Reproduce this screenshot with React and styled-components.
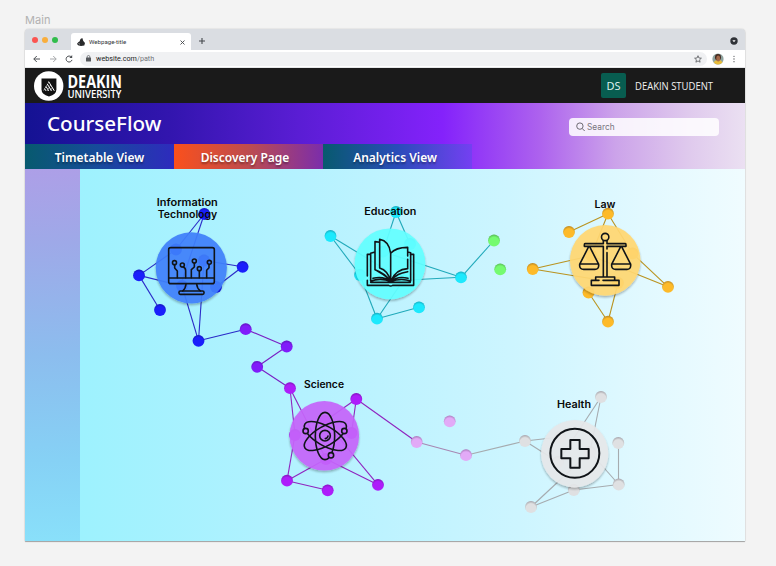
import React from "react";
import styled, { createGlobalStyle } from "styled-components";

const GlobalStyle = createGlobalStyle`
  * { box-sizing: border-box; }
  body { margin: 0; background: #f3f3f3; overflow: hidden; font-family: "Noto Sans", sans-serif; }
`;

const Page = styled.div`
  width: 776px;
  height: 566px;
  padding: 12px 31px 0 25px;
`;
const FrameName = styled.div`
  height: 17px;
  font: 400 11px/16px Inter, sans-serif;
  letter-spacing: 0.1px;
  color: #b1b1b1;
`;
const Browser = styled.main`
  width: 720px;
  height: 512px;
  border-radius: 4px 4px 0 0;
  overflow: hidden;
  display: flex;
  flex-direction: column;
`;
const Shadow = styled.div`
  width: 720px;
  height: 512px;
  border-radius: 4px 4px 0 0;
  box-shadow: 0 1px 1px rgba(0, 0, 0, 0.3), 0 0 1.5px rgba(0, 0, 0, 0.25);
`;
const TabStrip = styled.div`
  height: 21px;
  flex: none;
  background: #dadde2;
  display: flex;
  align-items: flex-end;
  padding: 0 7px 0 7px;
`;
const Lights = styled.div`
  display: flex;
  gap: 4px;
  height: 21px;
  align-items: center;
  width: 39px;
`;
const Light = styled.i`
  width: 6px;
  height: 6px;
  border-radius: 50%;
  background: ${(p) => p.$color};
`;
const BrowserTab = styled.div`
  width: 120px;
  height: 17px;
  border-radius: 3px 3px 0 0;
  background: #fff;
  display: flex;
  align-items: center;
  padding: 1px 6px 0 6px;
  font: 400 6.1px/10px Roboto, sans-serif;
  color: #33363a;
  gap: 4px;
`;
const Grow = styled.span`
  flex: 1;
`;
const StripIcon = styled.svg`
  display: block;
  flex: none;
  margin: ${(p) => p.$margin || "0"};
`;
const AddressBar = styled.div`
  height: 18px;
  flex: none;
  background: #fff;
  border-bottom: 1px solid #e6e7e9;
  display: flex;
  align-items: center;
  padding: 0 7px 0 8px;
`;
const UrlField = styled.div`
  width: 627px;
  height: 14px;
  margin-left: 5px;
  border-radius: 7px;
  background: #f0f1f3;
  display: flex;
  align-items: center;
  padding: 0 5px 0 6px;
  font: 400 7.2px/12px Roboto, sans-serif;
  color: #202124;
`;
const Path = styled.span`
  color: #70757a;
`;
const BrandBar = styled.header`
  height: 35px;
  flex: none;
  background: #1a1a1a;
  display: flex;
  align-items: center;
  padding: 0 0 0 9px;
`;
const Profile = styled.div`
  margin-left: auto;
  display: flex;
  align-items: center;
  gap: 9px;
  color: #f2f2f2;
`;
const Initials = styled.div`
  width: 25px;
  height: 25px;
  border-radius: 2px;
  background: #085d50;
  font-size: 11px;
  line-height: 26px;
  text-align: center;
  color: #dcefec;
`;
const UserName = styled.svg`
  display: block;
  overflow: visible;
  margin-right: 31px;
`;
const Banner = styled.section`
  height: 66px;
  flex: none;
  display: flex;
  flex-direction: column;
  background: linear-gradient(90deg, #141293 0%, #3215ae 20%, #5a1dd4 38%, #8422fb 58%, #ad62ee 71.5%, #cca3ea 82%, #dfc9ed 92%, #ebe0f2 100%);
`;
const BannerTop = styled.div`
  height: 41px;
  display: flex;
  justify-content: space-between;
  padding: 0 26px 0 22px;
`;
const Title = styled.h1`
  margin: 0;
  font: 500 20.6px/40px "Noto Sans", sans-serif;
  color: #fff;
`;
const Search = styled.div`
  margin-top: 15px;
  width: 150.5px;
  height: 18px;
  border-radius: 4px;
  background: rgba(255, 255, 255, 0.86);
  display: flex;
  align-items: center;
  padding-left: 7px;
  gap: 2.5px;
  font: 400 8.3px/18px Inter, sans-serif;
  color: #77747c;
`;
const Tabs = styled.nav`
  display: flex;
  height: 25px;
`;
const Tab = styled.a`
  width: 149px;
  height: 25px;
  padding-right: ${(p) => p.$shift || 0}px;
  text-align: center;
  font-weight: 600;
  font-size: 12px;
  line-height: 27px;
  color: #fff;
  text-shadow: 0 1.5px 2px rgba(0, 0, 0, 0.35);
  background: linear-gradient(90deg, ${(p) => p.$stops});
`;
const Body = styled.section`
  flex: 1;
  display: flex;
`;
const Sidebar = styled.aside`
  width: 55px;
  background: linear-gradient(178deg, #ad9fe7 0%, #9ea9e8 20%, #8cbdee 50%, #86d1f5 78%, #89e0fa 100%);
`;
const Canvas = styled.div`
  width: 665px;
  background: linear-gradient(88deg, #9df2fe 0%, #b5f2ff 35%, #cdf5ff 65%, #e2f9ff 85%, #f0fcff 100%);
`;
const Graph = styled.svg`
  display: block;
  width: 665px;
  height: 372px;
`;
const Caption = styled.text`
  font: 600 9.8px Inter, sans-serif;
  fill: #080808;
  text-anchor: middle;
`;
const Logo = styled.svg`
  display: block;
  overflow: visible;
`;
const LogoText = styled.text`
  font-family: "Open Sans", sans-serif;
  font-weight: ${(p) => p.$weight};
  font-size: ${(p) => p.$size}px;
  fill: #fff;
`;
const UserText = styled.text`
  font: 400 10.4px "Open Sans", sans-serif;
  fill: #f2f2f2;
`;

const BLUE = "#1a1ffb", VIOLET = "#801dfa", PURPLE = "#ad1dfa", CYAN = "#1de9fd";
const GREEN = "#75fb70", GOLD = "#fdba29", PINK = "#e2aaf7", GREY = "#dfe0e2";

const edges = [
  ["#2a2ac8", [[204.3,214,176,249.5],[204.3,214,180,287],[139,275.4,176,249.5],[139,275.4,182,286],[139,275.4,160,310],[182,286,198.5,340.8],[204,260.5,242.6,266.8],[204,260.5,198.5,340.8],[216,287,242.6,266.8],[198.5,340.8,245.7,329.2]]],
  ["#7a20c4", [[245.7,329.2,286.7,346.5],[286.7,346.5,257.2,366.8],[257.2,366.8,290,388.2]]],
  ["#8f24bf", [[290,388.2,295,435],[290,388.2,326,459],[295,435,287,480.7],[287,480.7,326,459],[378,484.8,326,459],[378,484.8,325,421],[356.3,399,325,421],[356.3,399,351.5,433],[287,480.7,327.7,490.3],[356.3,399,416.7,442]]],
  ["#20a9ba", [[330.5,236,360,275],[330.5,236,403.3,280.3],[396,212,383,251.7],[396,212,410,244],[383,251.7,461,277.3],[403.3,280.3,461,277.3],[403.3,280.3,377,318.7],[360,275,377,318.7],[377,318.7,419,307.3],[461,277.3,494,240.5]]],
  ["#b99320", [[608,213.7,569,232],[608,213.7,591,255.7],[608,213.7,632.5,253.5],[532.7,269,591,255.7],[532.7,269,618,283],[668,286.8,632.5,253.5],[668,286.8,591,255.7],[608,321.7,588.5,292.5],[608,321.7,618,283]]],
  ["#a787b3", [[416.7,442,466,455.2]]],
  ["#a6abaf", [[466,455.2,525,441],[525,441,560,437],[525,441,558,462],[601,397,558,462],[601,397,590,452],[618.7,484.5,590,452],[618.7,484.5,573.8,490],[573.8,490,531,507],[531,507,590,452],[618.5,443,618.5,484.5]]],
];

const nodes = [
  [BLUE, [[204.3,214],[139,275.4],[160,310],[198.5,340.8],[242.6,266.8],[176,249.5],[204,260.5],[182,286],[216,287]]],
  [VIOLET, [[245.7,329.2],[286.7,346.5],[257.2,366.8]]],
  [PURPLE, [[290,388.2],[356.3,399],[287,480.7],[327.7,490.3],[378,484.8],[295,435],[351.5,433],[325,421],[326,459]]],
  [CYAN, [[330.5,236],[396,212],[461,277.3],[377,318.7],[419,307.3],[410,244],[360,275],[383,251.7],[403.3,280.3]]],
  [GREEN, [[494,240.5],[500.2,269.3]]],
  [GOLD, [[608,213.7],[569,232],[532.7,269],[668,286.8],[608,321.7],[588.5,292.5],[632.5,253.5],[618,283],[591,255.7]]],
  [PINK, [[416.7,442],[466,455.2],[449.7,421.3]]],
  [GREY, [[601,397],[618.3,443],[618.7,484.5],[573.8,490],[531,507],[525,441],[560,437],[558,462],[590,452]]],
];

const hubs = [
  [191.3, 267.8, 35.6, "#4080fa"],
  [390, 263.8, 35.4, "#64feff"],
  [605.2, 260.4, 35.3, "#ffd772"],
  [324.3, 435.8, 34.8, "#c565fa"],
  [574.7, 453.7, 33.7, "#e6e8ea"],
];

const MonitorIcon = () => (
  <g transform="translate(125 190) scale(.33333)">
    <rect x="131" y="173" width="137" height="108" rx="6" />
    <path d="M131 264H268M183 282Q182 295 173 303M215 282Q216 295 226 303" />
    <rect x="162" y="303" width="75" height="10" rx="4" />
    <circle cx="148.500" cy="218" r="6" /><circle cx="172" cy="225" r="6" /><circle cx="208" cy="213" r="6" />
    <circle cx="223" cy="236" r="6" /><circle cx="253" cy="217" r="6" />
    <path d="M149 225V234L157 243V263M174 231Q182 233 182 242V263M208 220V231L199 239V263M223 243V263M252 224V233L245 241V263" />
  </g>
);

const BookIcon = () => (
  <g transform="translate(315 190) scale(.33333)">
    <path d="M227 274V190C224 166 211 151 194 148V234C211 239 222 253 227 274M194 157L180 155V239C202 247 216 257 227 274M180 186L167 190V273C190 265 211 268 227 274C215 256 198 250 180 239M167 193H157V258M157 271V286H221Q227 290 233 286H296V193H286M227 190C238 177 258 172 278 172V198M278 208V236C252 237 236 253 227 274C240 254 258 249 278 245M278 186L287 188V273C265 265 245 268 227 274M167 277H286M174 265Q205 257 227 274Q249 257 279 265" />
  </g>
);

const ScalesIcon = () => (
  <g transform="translate(515 190) scale(.33333)">
    <circle cx="270.500" cy="141" r="11" />
    <path d="M265 152V161H210Q208 161 208 165V169H265V260M276 152V161H331Q333 161 333 165V169H276V177M276 188V260M221 170L195 221M224 170L250 221M317 170L291 221M320 170L346 221M194 222H251V228Q250 238 240 238H206Q195 238 194 228ZM290 222H347V228Q346 238 336 238H302Q291 238 290 228ZM242 271V261H299V271M252 271H229V286H312V271H264" />
  </g>
);

const AtomIcon = () => (
  <g transform="translate(225 315) scale(.33333)">
    <ellipse cx="300" cy="363" rx="29" ry="71" />
    <ellipse cx="301" cy="363" rx="29" ry="71" transform="rotate(60 301 363)" />
    <ellipse cx="301" cy="363" rx="29" ry="71" transform="rotate(-60 301 363)" />
    <circle cx="300" cy="362" r="16" />
    <path d="M309 363Q308 370 301 371" />
    <g fill="#c565fa"><circle cx="242" cy="348" r="8" /><circle cx="358" cy="348" r="8" /><circle cx="318" cy="421" r="8" /></g>
  </g>
);

const CrossIcon = () => (
  <g transform="translate(400 380) scale(.33333)" strokeWidth="6">
    <circle cx="524.500" cy="220" r="73.500" />
    <path d="M511 180H539V207H566V235H539V263H511V235H484V207H511Z" />
  </g>
);

const CourseGraph = () => (
  <Graph viewBox="80 169 665 372">
    <defs>
      <radialGradient id="bead" cx=".5" cy=".64" r=".68">
        <stop offset=".62" stopColor="#000" stopOpacity="0" />
        <stop offset="1" stopColor="#102" stopOpacity=".32" />
      </radialGradient>
      <filter id="drop" x="-20%" y="-20%" width="140%" height="140%">
        <feDropShadow dx="0" dy="1.600" stdDeviation="1.100" floodColor="#000" floodOpacity=".32" />
      </filter>
    </defs>
    {edges.map(([color, list]) => (
      <g key={color} stroke={color} strokeWidth="1.100">
        {list.map(([x1, y1, x2, y2], i) => <line key={i} x1={x1} y1={y1} x2={x2} y2={y2} />)}
      </g>
    ))}
    {nodes.map(([color, list]) => (
      <g key={color}>
        {list.map(([cx, cy]) => (
          <g key={cx + "-" + cy}>
            <circle cx={cx} cy={cy} r="5.900" fill={color} />
            <circle cx={cx} cy={cy} r="5.900" fill="url(#bead)" />
          </g>
        ))}
      </g>
    ))}
    {hubs.map(([cx, cy, r, fill]) => (
      <circle key={cx} cx={cx} cy={cy} r={r} fill={fill} opacity=".93" filter="url(#drop)" />
    ))}
    <g fill="none" stroke="#101418" strokeWidth="4.800" strokeLinejoin="round" strokeLinecap="round">
      <MonitorIcon /><BookIcon /><ScalesIcon /><AtomIcon /><CrossIcon />
    </g>
    <Caption x="187.300" y="206" textLength="61" lengthAdjust="spacingAndGlyphs">Information</Caption>
    <Caption x="187.500" y="218" textLength="59.500" lengthAdjust="spacingAndGlyphs">Technology</Caption>
    <Caption x="390.300" y="214.700" textLength="52" lengthAdjust="spacingAndGlyphs">Education</Caption>
    <Caption x="605" y="208" textLength="21" lengthAdjust="spacingAndGlyphs">Law</Caption>
    <Caption x="324" y="387.500" textLength="40" lengthAdjust="spacingAndGlyphs">Science</Caption>
    <Caption x="574" y="407.500" textLength="34" lengthAdjust="spacingAndGlyphs">Health</Caption>
  </Graph>
);

const DeakinLogo = () => (
  <Logo width="92" height="32" viewBox="0 0 92 32">
    <circle cx="14.700" cy="16" r="14.700" fill="#fff" />
    <path d="M7.500 8.500H22.400V19.500Q22.400 24.300 14.950 26.500Q7.500 24.300 7.500 19.500Z" fill="#111" />
    <g stroke="#fff" strokeWidth="1" fill="none">
      <path d="M14.600 11.500L20.300 20.800M13.200 13.900L17.500 20.800M11.800 16.200L14.700 20.800M10.500 18.500L11.900 20.800" />
      <path d="M15 12L9.500 20.800M16.700 15L13.100 20.800M18.300 17.800L16.400 20.800" strokeWidth=".8" strokeDasharray="1 1" />
    </g>
    <LogoText x="33.500" y="18.300" $weight={700} $size={18} textLength="54.500" lengthAdjust="spacingAndGlyphs">DEAKIN</LogoText>
    <LogoText x="33.500" y="28" $weight={600} $size={10.2} textLength="54" lengthAdjust="spacingAndGlyphs">UNIVERSITY</LogoText>
  </Logo>
);

export default function App() {
  return (
    <Page>
      <GlobalStyle />
      <FrameName>Main</FrameName>
      <Shadow>
        <Browser>
          <TabStrip>
            <Lights><Light $color="#fb5551" /><Light $color="#f9ae3c" /><Light $color="#31bd4c" /></Lights>
            <BrowserTab>
              <StripIcon width="8" height="8" viewBox="0 0 8 8" fill="#292a2c">
                <path d="M3.500 1L5.300 0L6.300 3L8 5L7.300 7.500L4 8L1 7.300L0 5.800L1.500 4L2.500 3.500Z" />
                <path d="M1.500 5.500L3 6.200" stroke="#bbb" strokeWidth=".8" />
              </StripIcon>
              <span>Webpage-title</span>
              <Grow />
              <StripIcon width="5" height="5" viewBox="0 0 5 5" stroke="#44474b" strokeWidth=".9"><path d="M.5 .5L4.500 4.500M4.500 .5L.5 4.500" /></StripIcon>
            </BrowserTab>
            <StripIcon width="6" height="6" viewBox="0 0 6 6" stroke="#44474b" strokeWidth="1.100" $margin="0 0 6px 8px"><path d="M3 0V6M0 3H6" /></StripIcon>
            <Grow />
            <StripIcon width="8" height="8" viewBox="0 0 8 8" $margin="0 0 5px 0"><circle cx="4" cy="4" r="3.700" fill="#303338" /><path d="M2.400 3.200H5.600L4 5.300Z" fill="#fff" /></StripIcon>
          </TabStrip>
          <AddressBar>
            <StripIcon width="42" height="10" viewBox="0 0 42 10" fill="none" stroke="#4c4f53" strokeWidth="1">
              <path d="M7 5H.8M3.800 2L.8 5L3.800 8" />
              <path d="M17 5H23.200M20.200 2L23.200 5L20.200 8" stroke="#a6a8ab" />
              <path d="M38.500 3.200A3 3 0 1 0 39 5.900" />
              <path d="M39.200 1V4H36.300Z" fill="#4c4f53" stroke="none" />
            </StripIcon>
            <UrlField>
              <StripIcon width="5" height="7" viewBox="0 0 5 7" $margin="0 5px 0 0"><rect y="2.500" width="5" height="4" rx=".5" fill="#55585c" /><path d="M1.200 3V1.800A1.300 1.300 0 0 1 3.800 1.800V3" fill="none" stroke="#55585c" strokeWidth=".7" /></StripIcon>
              website.com<Path>/path</Path>
              <Grow />
              <StripIcon width="8" height="8" viewBox="0 0 8 8" fill="none" stroke="#55585c" strokeWidth=".8"><path d="M4 .7L4.950 3L7.400 3.200L5.550 4.800L6.100 7.200L4 5.950L1.900 7.200L2.450 4.800L.6 3.200L3.050 3Z" /></StripIcon>
            </UrlField>
            <StripIcon width="12" height="12" viewBox="0 0 12 12" $margin="0 0 0 5px">
              <circle cx="6" cy="6" r="5.600" fill="#8fa4a0" />
              <path d="M1.700 9.600Q3 6.500 6 7Q9 6.500 10.500 9.400Q6 13.500 1.700 9.600Z" fill="#e8bd3b" />
              <ellipse cx="6" cy="4.200" rx="3" ry="3.200" fill="#45291f" />
              <ellipse cx="6.200" cy="5.600" rx="1.900" ry="3" fill="#a36848" />
            </StripIcon>
            <StripIcon width="4" height="8" viewBox="0 0 4 8" $margin="0 0 0 8px" fill="#55585c"><circle cx="2" cy="1.300" r=".65" /><circle cx="2" cy="4" r=".65" /><circle cx="2" cy="6.700" r=".65" /></StripIcon>
          </AddressBar>
          <BrandBar>
            <DeakinLogo />
            <Profile>
              <Initials>DS</Initials>
              <UserName width="79" height="16"><UserText x="0" y="12.400" textLength="78" lengthAdjust="spacingAndGlyphs">DEAKIN STUDENT</UserText></UserName>
            </Profile>
          </BrandBar>
          <Banner>
            <BannerTop>
              <Title>CourseFlow</Title>
              <Search>
                <StripIcon width="9" height="10" viewBox="0 0 9 10" fill="none" stroke="#6d6a72" strokeWidth="1"><circle cx="3.900" cy="4.100" r="3.200" /><path d="M6.200 6.500L8.700 9" /></StripIcon>
                Search
              </Search>
            </BannerTop>
            <Tabs>
              <Tab $stops="#075a6e, #174a9c 50%, #2e2bbd">Timetable View</Tab>
              <Tab $shift={7} $stops="#fa501c, #bd4c4f 50%, #7b2dab">Discovery Page</Tab>
              <Tab $shift={5} $stops="#075a6e, #2a4cba 50%, #7440f2">Analytics View</Tab>
            </Tabs>
          </Banner>
          <Body>
            <Sidebar />
            <Canvas><CourseGraph /></Canvas>
          </Body>
        </Browser>
      </Shadow>
    </Page>
  );
}
